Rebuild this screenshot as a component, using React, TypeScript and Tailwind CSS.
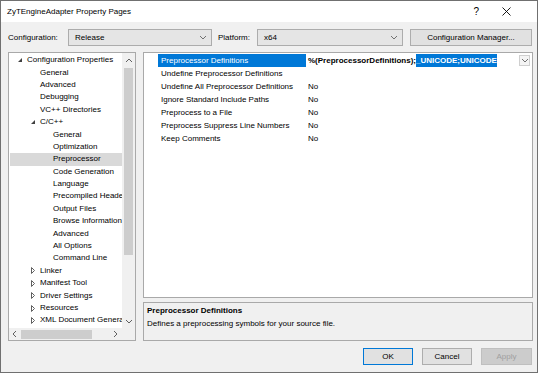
import React from "react";

type TreeItem = {
  label: string;
  level: number;
  toggle?: "open" | "closed";
  selected?: boolean;
};

const treeItems: TreeItem[] = [
  { label: "Configuration Properties", level: 0, toggle: "open" },
  { label: "General", level: 1 },
  { label: "Advanced", level: 1 },
  { label: "Debugging", level: 1 },
  { label: "VC++ Directories", level: 1 },
  { label: "C/C++", level: 1, toggle: "open" },
  { label: "General", level: 2 },
  { label: "Optimization", level: 2 },
  { label: "Preprocessor", level: 2, selected: true },
  { label: "Code Generation", level: 2 },
  { label: "Language", level: 2 },
  { label: "Precompiled Headers", level: 2 },
  { label: "Output Files", level: 2 },
  { label: "Browse Information", level: 2 },
  { label: "Advanced", level: 2 },
  { label: "All Options", level: 2 },
  { label: "Command Line", level: 2 },
  { label: "Linker", level: 1, toggle: "closed" },
  { label: "Manifest Tool", level: 1, toggle: "closed" },
  { label: "Driver Settings", level: 1, toggle: "closed" },
  { label: "Resources", level: 1, toggle: "closed" },
  { label: "XML Document Generator", level: 1, toggle: "closed" },
];

const properties: { name: string; value: string }[] = [
  { name: "Undefine Preprocessor Definitions", value: "" },
  { name: "Undefine All Preprocessor Definitions", value: "No" },
  { name: "Ignore Standard Include Paths", value: "No" },
  { name: "Preprocess to a File", value: "No" },
  { name: "Preprocess Suppress Line Numbers", value: "No" },
  { name: "Keep Comments", value: "No" },
];

function Chevron({ dir, className }: { dir: "up" | "down" | "left" | "right"; className?: string }) {
  const pts = {
    down: "1,2 4,5 7,2",
    up: "1,5 4,2 7,5",
    left: "5,1 2,4 5,7",
    right: "2,1 5,4 2,7",
  }[dir];
  return (
    <svg width="8" height="8" viewBox="0 0 8 8" className={className}>
      <polyline points={pts} fill="none" stroke="currentColor" strokeWidth="1" />
    </svg>
  );
}

function Toggle({ kind }: { kind: "open" | "closed" }) {
  if (kind === "open") {
    return (
      <svg width="6" height="6" viewBox="0 0 6 6">
        <polygon points="5,1 5,5 1,5" fill="#404040" />
      </svg>
    );
  }
  return (
    <svg width="6" height="7" viewBox="0 0 6 7">
      <polygon points="1.5,0.5 4.5,3.5 1.5,6.5" fill="none" stroke="#606060" strokeWidth="1" />
    </svg>
  );
}

function Combo({ value, width }: { value: string; width: string }) {
  return (
    <div className={`${width} h-full flex items-center justify-between border border-[#acacac] bg-[#e5e5e5] pl-[6px] pr-[4px]`}>
      <span>{value}</span>
      <Chevron dir="down" className="text-[#707070]" />
    </div>
  );
}

export default function App() {
  return (
    <div className="w-[540px] h-[374px] bg-white">
      <div className="w-[538px] h-[373px] flex flex-col border border-[#707070] bg-[#f0f0f0] text-[8px] leading-none text-black font-['Liberation_Sans',sans-serif]">
        {/* title bar */}
        <div className="h-[21px] shrink-0 flex items-center justify-between bg-white pl-[6px] pr-[26px]">
          <span className="text-[8px]">ZyTEngineAdapter Property Pages</span>
          <div className="flex items-center gap-[23px]">
            <span className="text-[10px]">?</span>
            <svg width="9" height="9" viewBox="0 0 9 9">
              <path d="M0.5 0.5 L8.5 8.5 M8.5 0.5 L0.5 8.5" stroke="#000" strokeWidth="0.9" />
            </svg>
          </div>
        </div>

        {/* configuration row */}
        <div className="mt-[7px] h-[17px] shrink-0 flex items-center pl-[7px]">
          <span className="w-[60px]">Configuration:</span>
          <Combo value="Release" width="w-[144px]" />
          <span className="ml-[6px] w-[39px]">Platform:</span>
          <Combo value="x64" width="w-[146px]" />
          <button className="ml-[7px] h-full w-[122px] border border-[#adadad] bg-[#e1e1e1]">
            Configuration Manager...
          </button>
        </div>

        {/* main area */}
        <div className="mt-[6px] flex pl-[7px] gap-[7px]">
          {/* tree */}
          <div className="w-[128px] h-[289px] shrink-0 border border-[#a9a9a9] bg-white flex flex-col">
            <div className="flex flex-1 min-h-0">
              <div className="flex-1 min-w-0 overflow-hidden pt-[1px]">
                {treeItems.map((item, i) => (
                  <div
                    key={i}
                    className={`h-[12.4px] flex items-center whitespace-nowrap ${item.selected ? "bg-[#d9d9d9] ml-[1px]" : ""}`}
                  >
                    <div
                      className="flex items-center"
                      style={{ paddingLeft: 4 + item.level * 13 - (item.selected ? 1 : 0) }}
                    >
                      <span className="w-[14px] flex justify-center">
                        {item.toggle && <Toggle kind={item.toggle} />}
                      </span>
                      <span>{item.label}</span>
                    </div>
                  </div>
                ))}
              </div>
              {/* vertical scrollbar */}
              <div className="w-[13px] shrink-0 bg-[#f0f0f0] flex flex-col items-center text-[#606060]">
                <Chevron dir="up" className="mt-[4px]" />
                <div className="mt-[3px] w-[9px] h-[187px] bg-[#cdcdcd]" />
                <div className="flex-1" />
                <Chevron dir="down" className="mb-[2px]" />
              </div>
            </div>
            {/* horizontal scrollbar */}
            <div className="h-[12px] shrink-0 flex bg-[#f0f0f0] text-[#606060]">
              <div className="flex-1 flex items-center">
                <Chevron dir="left" className="ml-[2px]" />
                <div className="ml-[2px] w-[71px] h-[9px] bg-[#cdcdcd]" />
                <div className="flex-1" />
                <Chevron dir="right" className="mr-[2px]" />
              </div>
              <div className="w-[13px] bg-[#f0f0f0]" />
            </div>
          </div>

          {/* right column */}
          <div className="w-[390px] flex flex-col gap-[4px]">
            <div className="h-[246px] border border-[#a9a9a9] bg-white pt-[1px] pl-[14px] pr-[2px]">
              <div className="h-[13px] flex items-center">
                <div className="w-[148px] h-full flex items-center bg-[#0078d7] text-white pl-[3px]">
                  Preprocessor Definitions
                </div>
                <div className="flex-1 h-full flex items-center justify-between pl-[2px]">
                  <span className="font-bold">
                    %(PreprocessorDefinitions);
                    <span className="bg-[#0078d7] text-white py-[2px]">_UNICODE;UNICODE</span>
                  </span>
                  <div className="w-[11px] h-[11px] border border-[#cfcfcf] bg-[#f4f4f4] flex items-center justify-center text-[#707070]">
                    <Chevron dir="down" />
                  </div>
                </div>
              </div>
              {properties.map((p) => (
                <div key={p.name} className="h-[13px] flex items-center">
                  <div className="w-[148px] pl-[3px] whitespace-nowrap">{p.name}</div>
                  <div className="pl-[2px]">{p.value}</div>
                </div>
              ))}
            </div>
            <div className="h-[39px] border border-[#a9a9a9] bg-[#f0f0f0] px-[3px] pt-[4px] flex flex-col gap-[5px]">
              <span className="font-bold">Preprocessor Definitions</span>
              <span>Defines a preprocessing symbols for your source file.</span>
            </div>
          </div>
        </div>

        {/* buttons */}
        <div className="mt-[7px] h-[17px] flex justify-end gap-[9px] pr-[5px]">
          <button className="w-[50px] h-full border border-[#0078d7] bg-[#e1e1e1]">OK</button>
          <button className="w-[50px] h-full border border-[#adadad] bg-[#e1e1e1]">Cancel</button>
          <button className="w-[51px] h-full border border-[#bfbfbf] bg-[#cccccc] text-[#a0a0a0]">Apply</button>
        </div>
      </div>
    </div>
  );
}
